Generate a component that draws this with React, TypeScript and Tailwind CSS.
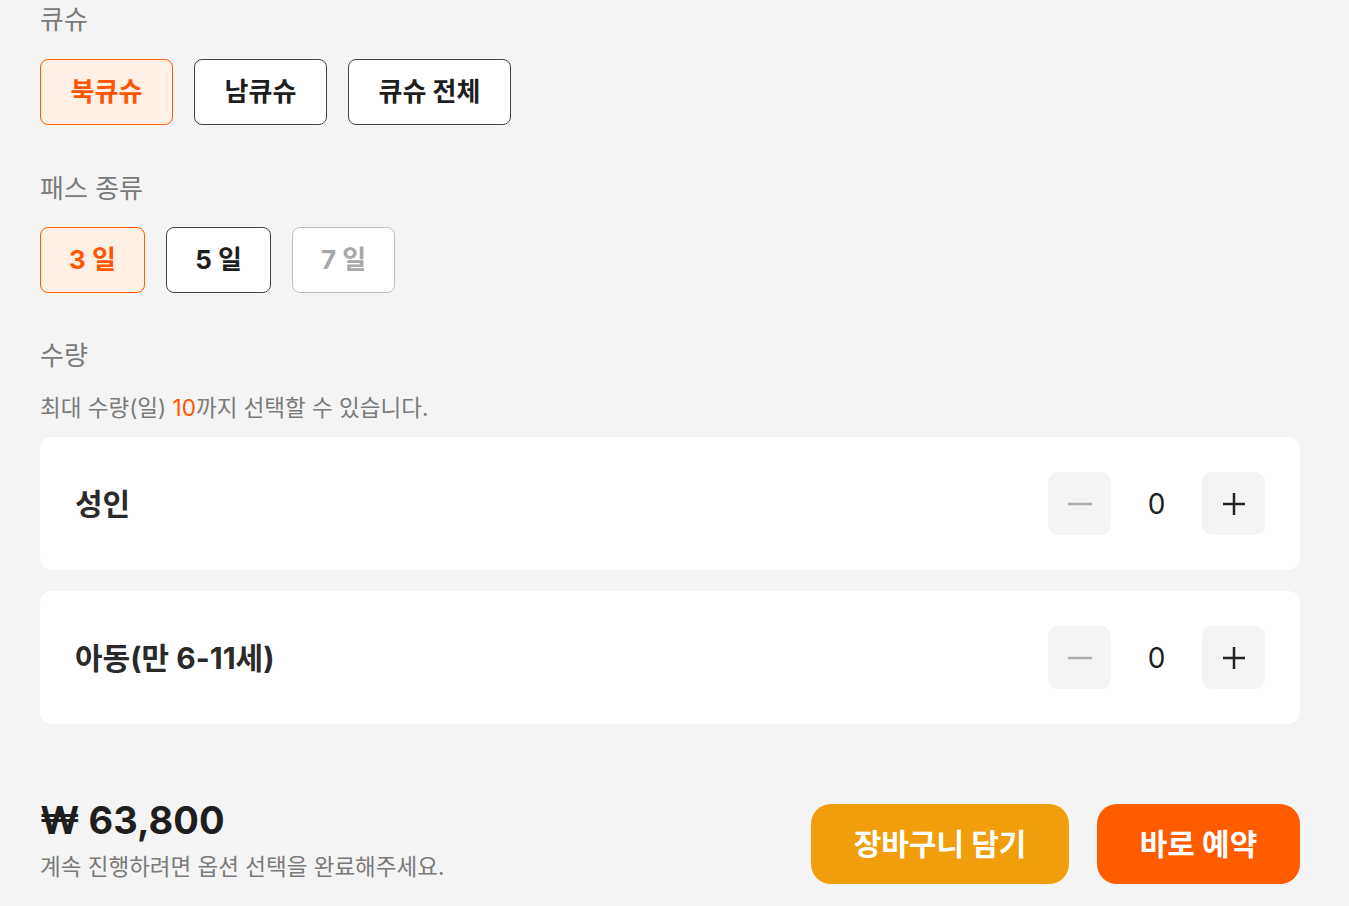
import React from "react";

const font = { fontFamily: '"Inter", "Noto Sans CJK KR", sans-serif' };

function OptButton({ label, state, w }: { label: string; state: "on" | "off" | "dis"; w: string }) {
  const cls =
    state === "on"
      ? "border-[#ff5c00] bg-[#fff0e6] text-[#ff5500]"
      : state === "off"
      ? "border-[#444444] bg-white text-[#1e1e1e]"
      : "border-[#bdbdbd] bg-white text-[#a8a8a8]";
  return (
    <button className={`h-[66px] ${w} rounded-[8px] border text-[26px] font-bold leading-none ${cls}`}>
      {label}
    </button>
  );
}

function Counter({ label }: { label: string }) {
  return (
    <div className="flex items-center justify-between rounded-[12px] bg-white p-[35px]">
      <div className="text-[30px] font-bold leading-[36px] text-[#2a2a2a]">{label}</div>
      <div className="flex items-center">
        <button className="flex h-[63px] w-[63px] items-center justify-center rounded-[10px] bg-[#f4f4f4]">
          <svg width="26" height="26" viewBox="0 0 26 26">
            <line x1="1" y1="13" x2="25" y2="13" stroke="#adadad" strokeWidth="2.5" />
          </svg>
        </button>
        <div className="w-[91px] text-center text-[28px] leading-none text-[#1e1e1e]">0</div>
        <button className="flex h-[63px] w-[63px] items-center justify-center rounded-[10px] bg-[#f4f4f4]">
          <svg width="24" height="24" viewBox="0 0 24 24">
            <line x1="1" y1="12" x2="23" y2="12" stroke="#222" strokeWidth="2.5" />
            <line x1="12" y1="1" x2="12" y2="23" stroke="#222" strokeWidth="2.5" />
          </svg>
        </button>
      </div>
    </div>
  );
}

export default function App() {
  return (
    <div style={font} className="min-h-[906px] w-full bg-[#f4f4f4] px-[40px] pb-[22px] pt-[4px] text-[#222]">
      <div className="w-[1260px]">
        <div className="text-[26px] leading-[32px] text-[#7a7a7a]">큐슈</div>
        <div className="mt-[23px] flex gap-[21px]">
          <OptButton label="북큐슈" state="on" w="w-[133px]" />
          <OptButton label="남큐슈" state="off" w="w-[133px]" />
          <OptButton label="큐슈 전체" state="off" w="w-[163px]" />
        </div>

        <div className="mt-[48px] text-[26px] leading-[32px] text-[#7a7a7a]">패스 종류</div>
        <div className="mt-[22px] flex gap-[21px]">
          <OptButton label="3 일" state="on" w="w-[105px]" />
          <OptButton label="5 일" state="off" w="w-[105px]" />
          <OptButton label="7 일" state="dis" w="w-[103px]" />
        </div>

        <div className="mt-[47px] text-[26px] leading-[32px] text-[#7a7a7a]">수량</div>
        <div className="mt-[22px] text-[22.5px] leading-[28px] text-[#7a7a7a]">
          최대 수량(일) <span className="text-[#ff5500]">10</span>까지 선택할 수 있습니다.
        </div>

        <div className="mt-[15px] flex flex-col gap-[21px]">
          <Counter label="성인" />
          <Counter label="아동(만 6-11세)" />
        </div>

        <div className="mt-[71px] flex items-start justify-between">
          <div>
            <div className="text-[38px] font-bold leading-[50px] text-[#1e1e1e]">₩ 63,800</div>
            <div className="mt-[8px] text-[22.5px] leading-[28px] text-[#7a7a7a]">
              계속 진행하려면 옵션 선택을 완료해주세요.
            </div>
          </div>
          <div className="mt-[9px] flex gap-[28px]">
            <button className="h-[80px] w-[258px] rounded-[20px] bg-[#f09e0b] text-[30px] font-bold leading-none text-white">
              장바구니 담기
            </button>
            <button className="h-[80px] w-[203px] rounded-[20px] bg-[#ff5c00] text-[30px] font-bold leading-none text-white">
              바로 예약
            </button>
          </div>
        </div>
      </div>
    </div>
  );
}
